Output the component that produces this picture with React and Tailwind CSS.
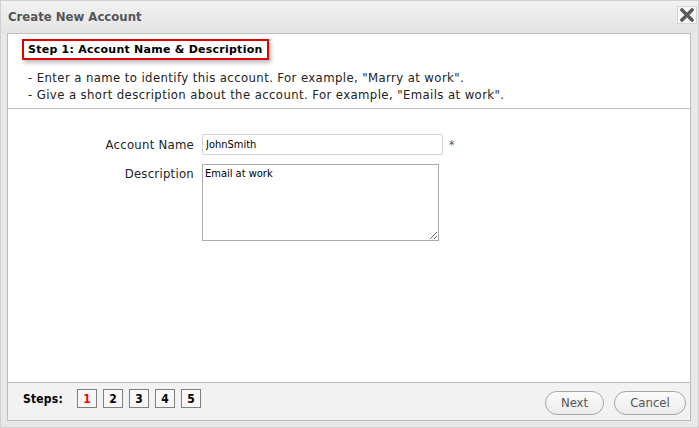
import React from 'react';

const tahoma = { fontFamily: '"DejaVu Sans Condensed", "DejaVu Sans", sans-serif' };
const verdana = { fontFamily: '"DejaVu Sans", sans-serif' };

function StepBox({ n, active }) {
  return (
    <div
      className={`w-[20px] h-[19px] border border-[#808080] bg-[#f7f7f7] flex items-center justify-center text-[12px] font-bold ${
        active ? 'text-[#ff0000]' : 'text-black'
      }`}
    >
      {n}
    </div>
  );
}

export default function App() {
  return (
    <div
      className="w-[699px] h-[428px] bg-[#e8e8e8] border border-[#d0d0d0] flex flex-col"
      style={tahoma}
    >
      {/* Title bar */}
      <div className="h-[32px] shrink-0 flex items-center justify-between pl-[7px] pr-[1px] bg-gradient-to-b from-[#f2f2f2] to-[#e4e4e4]">
        <span className="text-[13px] font-bold text-[#555555] pb-[1px]">Create New Account</span>
        <button className="w-[20px] h-[18px] mb-[4px] border border-[#d4d4d4] bg-[#f7f7f7] flex items-center justify-center">
          <svg width="14" height="14" viewBox="0 0 14 14">
            <path d="M2 2 L12 12 M12 2 L2 12" stroke="#5a5a5a" strokeWidth="3.4" strokeLinecap="square" />
          </svg>
        </button>
      </div>

      {/* Panel */}
      <div className="ml-[6px] mr-[7px] h-[388px] bg-white border border-[#bdbdbd] flex flex-col">
        {/* Header */}
        <div className="h-[75px] shrink-0 border-b border-[#bdbdbd] pl-[14px] pt-[5px]">
          <div
            className="inline-block align-top border-2 border-[#e00000] px-[4px] py-[1px] text-[11px] leading-[15px] font-bold text-black tracking-[0.25px] shadow-[2px_3px_4px_rgba(0,0,0,0.25)]"
            style={verdana}
          >
            Step 1: Account Name &amp; Description
          </div>
          <div className="mt-[6px] pl-[6px] text-[13px] leading-[17px] text-[#222222] tracking-[0.4px]">
            <div>- Enter a name to identify this account. For example, "Marry at work".</div>
            <div>- Give a short description about the account. For example, "Emails at work".</div>
          </div>
        </div>

        {/* Form */}
        <div className="flex-1 pt-[25px]">
          <div className="flex items-start">
            <div className="w-[186px] text-right text-[13px] text-[#222222] pt-[1px] tracking-[0.25px]">Account Name</div>
            <input
              className="ml-[8px] w-[241px] h-[21px] border border-[#d2d2d2] rounded-[2px] px-[3px] text-[11px] text-black outline-none"
              defaultValue="JohnSmith"
            />
            <span className="ml-[6px] pt-[4px] text-[12px] text-[#555555] leading-[14px]">*</span>
          </div>
          <div className="flex items-start mt-[9px]">
            <div className="w-[186px] text-right text-[13px] text-[#222222] tracking-[0.25px]">Description</div>
            <textarea
              className="ml-[8px] w-[237px] h-[77px] border border-[#aaaaaa] px-[2px] py-[1px] text-[11px] text-black outline-none resize"
              defaultValue="Email at work"
            />
          </div>
        </div>

        {/* Footer */}
        <div className="h-[38px] shrink-0 border-t border-[#bdbdbd] bg-[#f2f2f2] flex items-center pl-[15px] pr-[4px]">
          <span className="text-[12px] font-bold text-black mr-[14px] pb-[6px] tracking-[0.2px]">Steps:</span>
          <div className="flex gap-[6px] pb-[6px]">
            <StepBox n="1" active />
            <StepBox n="2" />
            <StepBox n="3" />
            <StepBox n="4" />
            <StepBox n="5" />
          </div>
          <div className="ml-auto flex gap-[10px] pt-[3px]">
            <button className="w-[59px] h-[24px] rounded-[12px] border border-[#a6a6a6] bg-gradient-to-b from-[#fbfbfb] to-[#ececec] text-[13px] text-[#555555]">
              Next
            </button>
            <button className="w-[72px] h-[24px] rounded-[12px] border border-[#a6a6a6] bg-gradient-to-b from-[#fbfbfb] to-[#ececec] text-[13px] text-[#555555]">
              Cancel
            </button>
          </div>
        </div>
      </div>
    </div>
  );
}
